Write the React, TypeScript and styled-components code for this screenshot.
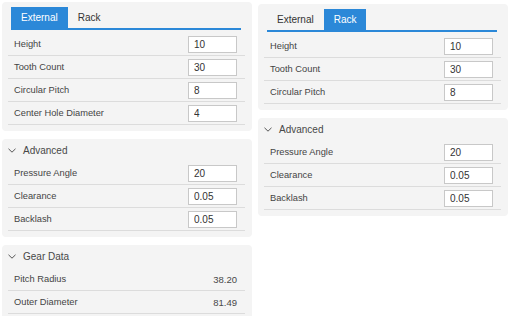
import styled, {createGlobalStyle} from "styled-components";

interface Field {
    label: string;
    value: string;
}

const GlobalStyle = createGlobalStyle`
  body {
    margin: 0;
    background: #ffffff;
    font-family: "Liberation Sans", Arial, sans-serif;
    color: #333333;
  }
`;

const Page = styled.div`
  display: flex;
  gap: 6px;
  padding: 0 4px 0 2px;
  width: 512px;
  height: 316px;
  box-sizing: border-box;
  overflow: hidden;
`;

const Column = styled.div<{ $offset: number }>`
  width: 250px;
  display: flex;
  flex-direction: column;
  gap: 8px;
  padding-top: ${p => p.$offset}px;
`;

const Panel = styled.div`
  background: #f4f4f4;
  border-radius: 4px;
  padding: 0 7px 6px 6px;
`;

const TabPanel = styled(Panel)`
  padding-top: 5px;
`;

const TabBar = styled.div`
  display: flex;
  margin: 0 4px 3px 3px;
  border-bottom: 2px solid #2b88d8;
`;

const Tab = styled.div<{ $active?: boolean }>`
  height: 21px;
  padding: 0 10px;
  display: flex;
  align-items: center;
  font-size: 10px;
  background: ${p => (p.$active ? "#2b88d8" : "transparent")};
  color: ${p => (p.$active ? "#ffffff" : "#333333")};
`;

const Header = styled.div`
  height: 23px;
  display: flex;
  align-items: center;
  gap: 7px;
  padding-left: 0;
  font-size: 10px;
  color: #484848;
`;

const Row = styled.div`
  height: 22px;
  display: flex;
  align-items: center;
  justify-content: space-between;
  padding: 0 8px 0 6px;
  border-bottom: 1px solid #dcdcdc;
  font-size: 9.3px;
  color: #444444;
`;

const NumberInput = styled.input`
  width: 49px;
  height: 17px;
  box-sizing: border-box;
  border: 1px solid #c8c8c8;
  background: #ffffff;
  padding: 0 5px;
  font-family: inherit;
  font-size: 10px;
  color: #333333;
  outline: none;
`;

const Value = styled.span`
  font-size: 9.5px;
  color: #484848;
`;

function Chevron() {
    return (
        <svg width="8" height="5" viewBox="0 0 8 5">
            <path d="M0.5 0.8 L4 4.2 L7.5 0.8" fill="none" stroke="#555" strokeWidth="1"/>
        </svg>
    );
}

function InputRows({fields}: { fields: Field[] }) {
    return (
        <>
            {fields.map(f => (
                <Row key={f.label}>
                    <span>{f.label}</span>
                    <NumberInput defaultValue={f.value}/>
                </Row>
            ))}
        </>
    );
}

const externalFields: Field[] = [
    {label: "Height", value: "10"},
    {label: "Tooth Count", value: "30"},
    {label: "Circular Pitch", value: "8"},
    {label: "Center Hole Diameter", value: "4"},
];

const rackFields = externalFields.slice(0, 3);

const advancedFields: Field[] = [
    {label: "Pressure Angle", value: "20"},
    {label: "Clearance", value: "0.05"},
    {label: "Backlash", value: "0.05"},
];

const gearData: Field[] = [
    {label: "Pitch Radius", value: "38.20"},
    {label: "Outer Diameter", value: "81.49"},
];

function GearColumn({rack, offset}: { rack: boolean; offset: number }) {
    return (
        <Column $offset={offset}>
            <TabPanel>
                <TabBar>
                    <Tab $active={!rack}>External</Tab>
                    <Tab $active={rack}>Rack</Tab>
                </TabBar>
                <InputRows fields={rack ? rackFields : externalFields}/>
            </TabPanel>
            <Panel>
                <Header><Chevron/>Advanced</Header>
                <InputRows fields={advancedFields}/>
            </Panel>
            {!rack && (
                <Panel>
                    <Header><Chevron/>Gear Data</Header>
                    {gearData.map(d => (
                        <Row key={d.label}>
                            <span>{d.label}</span>
                            <Value>{d.value}</Value>
                        </Row>
                    ))}
                </Panel>
            )}
        </Column>
    );
}

export default function App() {
    return (
        <>
            <GlobalStyle/>
            <Page>
                <GearColumn rack={false} offset={2}/>
                <GearColumn rack={true} offset={4}/>
            </Page>
        </>
    );
}
